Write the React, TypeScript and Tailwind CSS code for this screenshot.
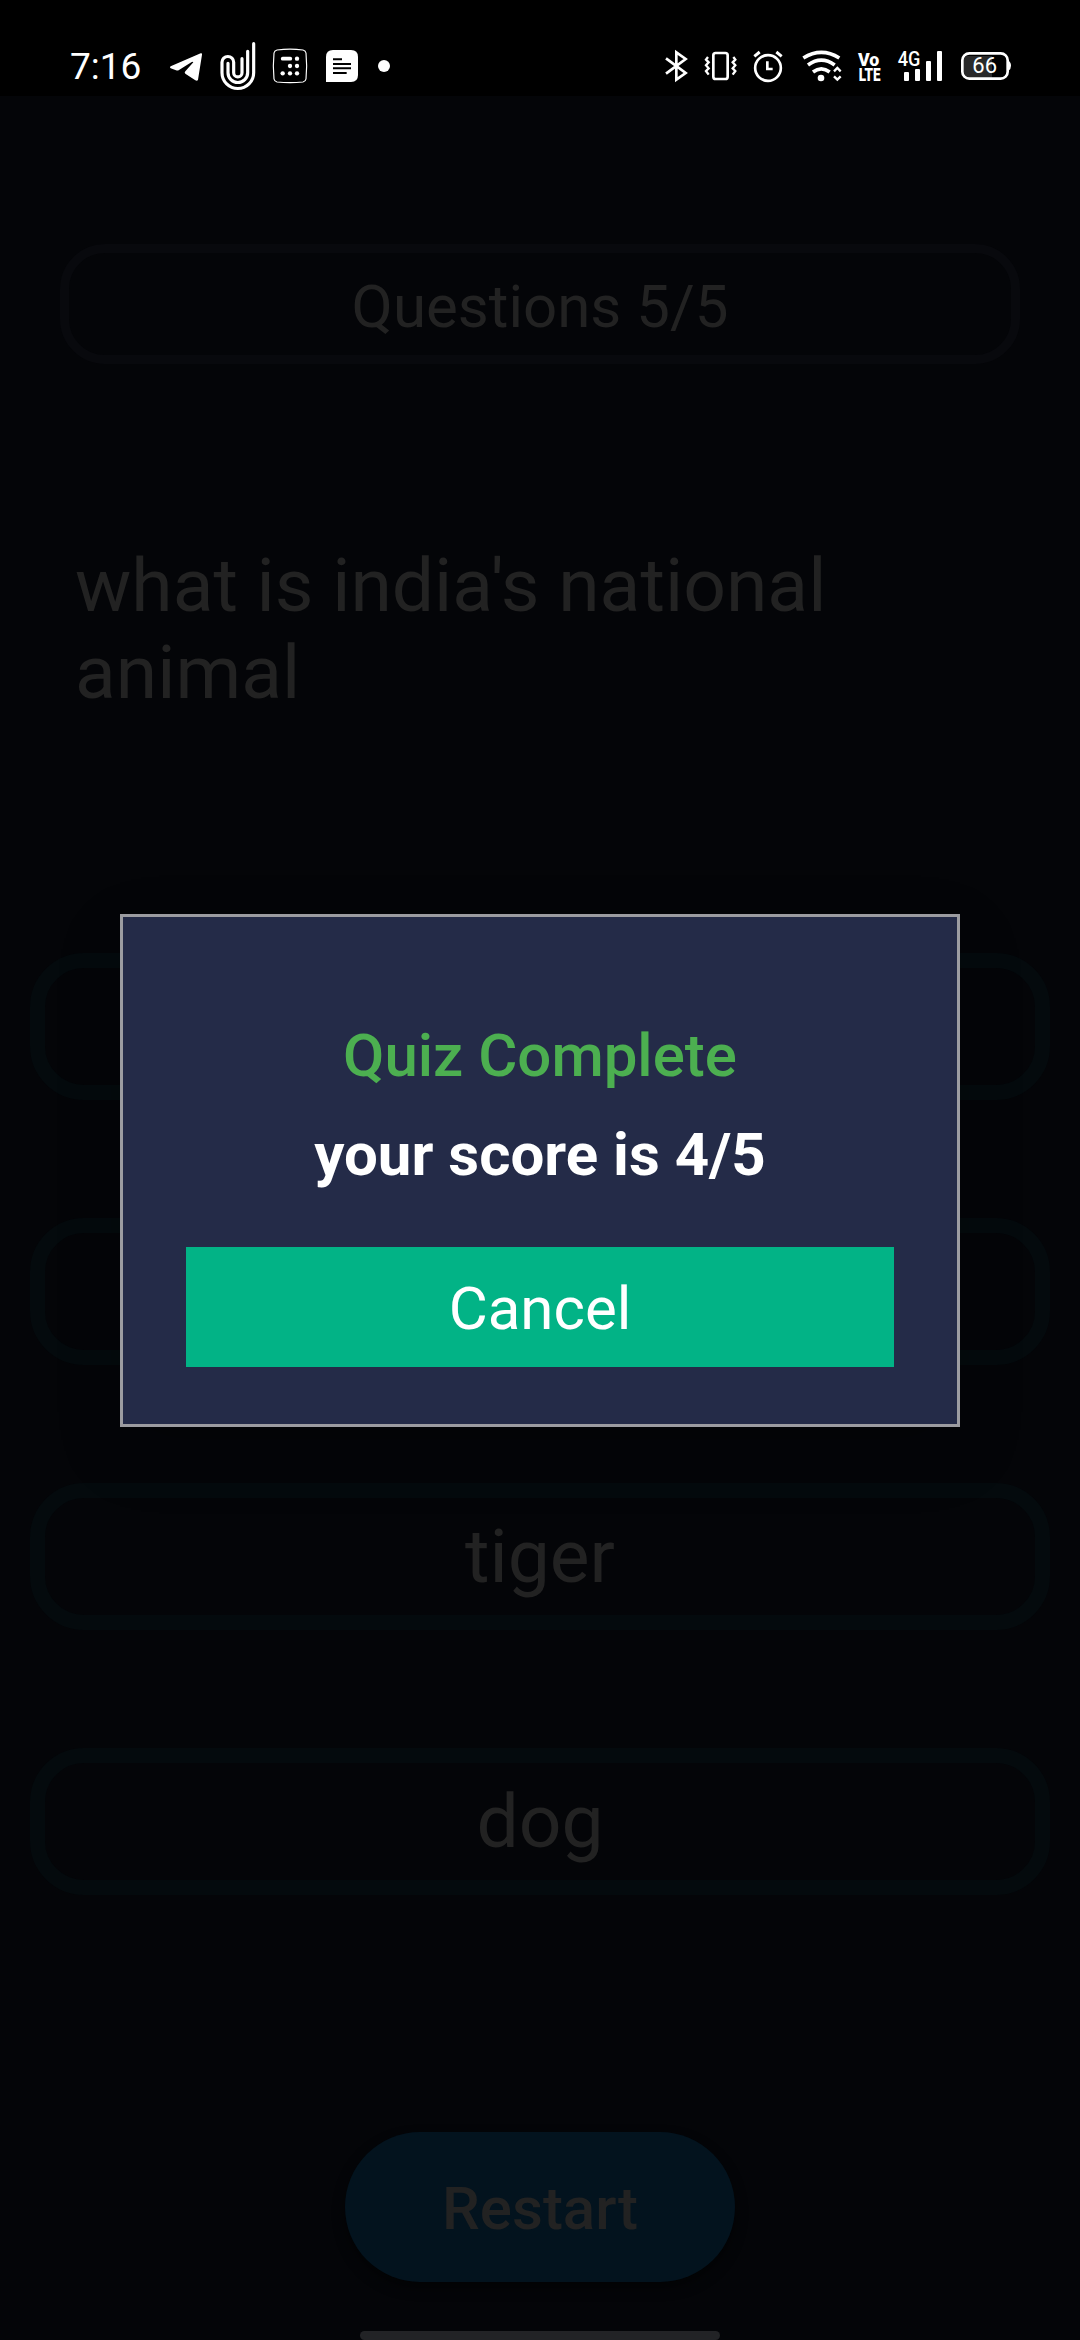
import React from "react";

const answers = ["", "", "tiger", "dog"];

function StatusBar() {
  return (
    <header className="flex h-[96px] shrink-0 items-start bg-black text-white">
      <div className="ml-[70px] mt-[45px] w-[94px] shrink-0 text-[37px] leading-[44px]">7:16</div>
      <svg className="mt-[30px] h-[66px] w-[226px] shrink-0" viewBox="342 0 678 198" fill="none" stroke="white">
        <path d="M362 109 452 70q5-1 4 4l-12 75q-2 5-8 2l-30-20q-4-3 0-7l24-27q-2-3-6 0l-37 23q-4 3-9 1l-16-6q-5-3 0-6z" fill="white" stroke="none" />
        <g strokeWidth="9.5" strokeLinecap="round">
          <path d="M611 41v87a47 47 0 0 1-95 0V97a17.5 17.5 0 0 1 35 0v31a12.5 12.5 0 0 0 25 0V86" />
          <path d="M593 64v64a29 29 0 0 1-59 0v-28" />
        </g>
        <path d="M681 60q39-5 78 0 8 2 9 9 4 39 0 78-1 7-9 9-39 4-78 0-8-2-9-9-4-39 0-78 1-7 9-9z" strokeWidth="3.5" />
        <path d="M698 86h23" strokeWidth="11" strokeLinecap="round" />
        <g fill="white" stroke="none">
          <circle cx="741" cy="86" r="6.5" />
          <circle cx="720" cy="108" r="6.5" />
          <circle cx="741" cy="108" r="6.5" />
          <circle cx="698" cy="130" r="6.5" />
          <circle cx="720" cy="130" r="6.5" />
          <circle cx="741" cy="130" r="6.5" />
          <path d="M849 60h54q21 0 21 21v54q0 21-21 21h-75V81q0-21 21-21z" />
          <circle cx="1002" cy="108" r="18" />
        </g>
        <path d="M849 88h27M849 102h54M849 115h54M849 129h41" stroke="black" strokeWidth="6" />
      </svg>
      <svg className="ml-[272px] mt-[30px] h-[66px] w-[190px] shrink-0" viewBox="66 0 570 198" fill="none" stroke="white" strokeWidth="8">
        <path d="M78 85l59 44-28 20V67l28 20-59 44" />
        <rect x="220" y="69" width="43" height="78" rx="7" />
        <path d="M204 81l-6 8 8 8-8 9 8 9-8 8 8 11M280 81l6 8-8 8 8 9-8 9 8 8-8 11" strokeWidth="7" />
        <circle cx="384" cy="114" r="38.5" />
        <path d="M382 94v23h16" />
        <path d="M343 79l16-13M425 79l-16-13" strokeWidth="9" />
        <path d="M490 84q54-34 108 0M504 105q40-29 80 0M519 126q25-19 50 0" strokeWidth="11" />
        <circle cx="543" cy="144" r="10" fill="white" stroke="none" />
        <path d="M582 124l10-10 10 10M582 139l10 10 10-10" strokeWidth="7" />
      </svg>
      <svg className="ml-[5px] mt-[30px] h-[66px] w-[26px] shrink-0 overflow-visible" viewBox="81 0 78 198" fill="white">
        <text x="84" y="107" fontFamily="Roboto, sans-serif" fontWeight="900" fontSize="57" textLength="64" lengthAdjust="spacingAndGlyphs">Vo</text>
        <text x="86" y="153" fontFamily="Roboto, sans-serif" fontWeight="900" fontSize="57" textLength="66" lengthAdjust="spacingAndGlyphs">LTE</text>
      </svg>
      <svg className="ml-[14px] mt-[30px] h-[66px] w-[48px] shrink-0" viewBox="201 0 144 198" fill="white">
        <text x="203" y="107" fontFamily="Roboto, sans-serif" fontWeight="500" fontSize="60" textLength="68" lengthAdjust="spacingAndGlyphs">4G</text>
        <rect x="222" y="126" width="15" height="27" rx="3" />
        <rect x="255" y="117" width="15" height="36" rx="3" />
        <rect x="288" y="93" width="15" height="60" rx="3" />
        <rect x="321" y="63" width="15" height="90" rx="3" />
      </svg>
      <svg className="ml-[14px] mt-[30px] h-[66px] w-[54px] shrink-0" viewBox="387 0 162 198" fill="none">
        <path d="M398 93q0-15 15-15h73v67h-73q-15 0-15-15z" fill="#292929" />
        <rect x="397" y="70" width="136" height="76" rx="21" stroke="white" strokeWidth="8" />
        <path d="M535 92q8 4 8 15t-8 16z" fill="white" />
        <text x="427" y="129" fontFamily="Roboto, sans-serif" fontSize="66" textLength="74" fill="white">66</text>
      </svg>
    </header>
  );
}

function ScoreDialog() {
  return (
    <div className="absolute inset-0 flex items-start justify-center pt-[914px]">
      <section className="flex h-[513px] w-[840px] flex-col items-center border-[3px] border-[#9c9ca1] bg-[#242b48] px-[63px] pt-[104px] shadow-[0_24px_60px_0_rgba(0,0,0,0.2)]">
        <h1 className="text-[60px] font-medium leading-[70px] text-[#4caf50]">Quiz Complete</h1>
        <p className="mt-[29px] text-[60px] font-bold leading-[70px] text-white">your score is 4/5</p>
        <button className="mt-[57px] flex h-[120px] w-full items-center justify-center bg-[#02b386] pt-[4px] text-[60px] text-white">Cancel</button>
      </section>
    </div>
  );
}

export default function App() {
  return (
    <div className="relative flex h-[2340px] w-[1080px] flex-col overflow-hidden bg-[#040508] font-['Roboto',sans-serif] text-[#222222]">
      <StatusBar />
      <main className="flex flex-1 flex-col items-center">
        <div className="mt-[148px] flex h-[120px] w-[960px] items-center justify-center rounded-[45px] border-[9px] border-[#08090d] pt-[5px] text-[60px]">
          Questions 5/5
        </div>
        <p className="mt-[178px] h-[176px] w-[930px] text-[75px] leading-[87px]">what is india's national animal</p>
        <div className="mt-[235px] flex w-[1020px] flex-col gap-[118px]">
          {answers.map((answer, index) => (
            <button key={index} className="flex h-[147px] w-full items-center justify-center rounded-[54px] border-[15px] border-[#040a0d] pb-[2px] text-[75px] leading-[88px]">
              {answer}
            </button>
          ))}
        </div>
        <button className="mt-[237px] flex h-[150px] w-[390px] items-center justify-center rounded-full bg-[#03131e] pt-[4px] text-[60px] font-medium shadow-[0_6px_12px_rgba(0,0,0,0.5)]">
          Restart
        </button>
        <div className="mt-[49px] h-[9px] w-[360px] rounded-full bg-[#222326]" />
      </main>
      <ScoreDialog />
    </div>
  );
}
